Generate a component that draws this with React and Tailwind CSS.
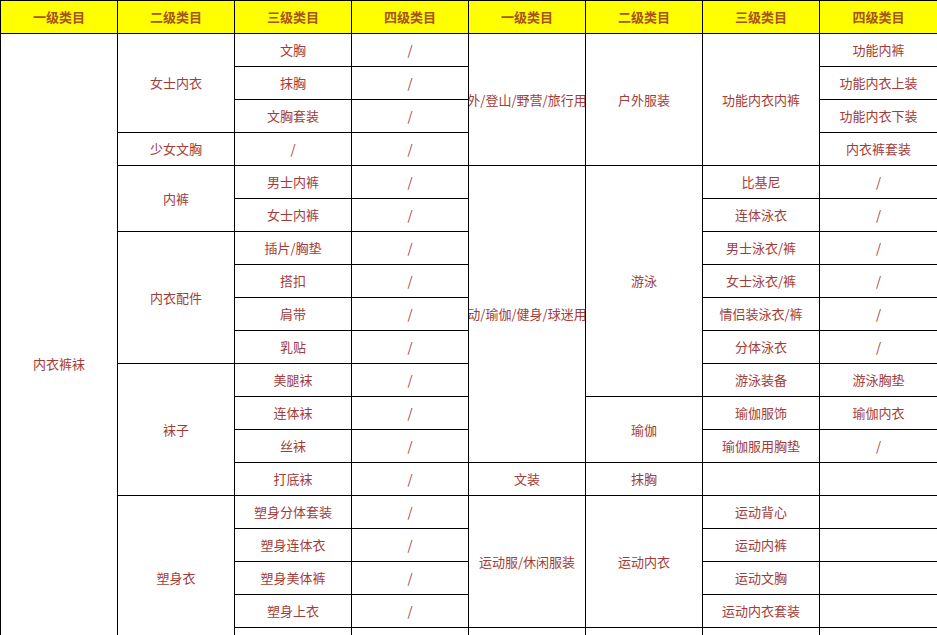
// App.jsx
import React from 'react';

const headers = ['一级类目', '二级类目', '三级类目', '四级类目', '一级类目', '二级类目', '三级类目', '四级类目'];

// cells listed row by row, [text, rowSpan]
const rows = [
  [['内衣裤袜', 20], ['女士内衣', 3], ['文胸'], ['/'], ['户外/登山/野营/旅行用品', 4], ['户外服装', 4], ['功能内衣内裤', 4], ['功能内裤']],
  [['抹胸'], ['/'], ['功能内衣上装']],
  [['文胸套装'], ['/'], ['功能内衣下装']],
  [['少女文胸'], ['/'], ['/'], ['内衣裤套装']],
  [['内裤', 2], ['男士内裤'], ['/'], ['运动/瑜伽/健身/球迷用品', 9], ['游泳', 7], ['比基尼'], ['/']],
  [['女士内裤'], ['/'], ['连体泳衣'], ['/']],
  [['内衣配件', 4], ['插片/胸垫'], ['/'], ['男士泳衣/裤'], ['/']],
  [['搭扣'], ['/'], ['女士泳衣/裤'], ['/']],
  [['肩带'], ['/'], ['情侣装泳衣/裤'], ['/']],
  [['乳贴'], ['/'], ['分体泳衣'], ['/']],
  [['袜子', 4], ['美腿袜'], ['/'], ['游泳装备'], ['游泳胸垫']],
  [['连体袜'], ['/'], ['瑜伽', 2], ['瑜伽服饰'], ['瑜伽内衣']],
  [['丝袜'], ['/'], ['瑜伽服用胸垫'], ['/']],
  [['打底袜'], ['/'], ['文装'], ['抹胸'], [''], ['']],
  [['塑身衣', 5], ['塑身分体套装'], ['/'], ['运动服/休闲服装', 4], ['运动内衣', 4], ['运动背心'], ['']],
  [['塑身连体衣'], ['/'], ['运动内裤'], ['']],
  [['塑身美体裤'], ['/'], ['运动文胸'], ['']],
  [['塑身上衣'], ['/'], ['运动内衣套装'], ['']],
  // rows below the fold
  [[''], [''], [''], [''], [''], ['']],
  [[''], [''], [''], [''], [''], [''], ['']],
];

const spanClass = {
  1: '',
  2: 'row-span-2',
  3: 'row-span-3',
  4: 'row-span-4',
  5: 'row-span-5',
  7: 'row-span-7',
  9: 'row-span-9',
  20: 'row-span-20',
};

export default function App() {
  return (
    <div
      className="w-[937px] h-[635px] overflow-hidden bg-white"
      style={{ fontFamily: '"Noto Sans CJK SC", "Liberation Sans", sans-serif' }}
    >
      <div className="grid grid-cols-[repeat(7,116px)_117px] auto-rows-[32px] gap-px bg-black border-l border-t border-black w-max">
        {/* header */}
        {headers.map((h, i) => (
          <div
            key={'h' + i}
            className="bg-[#ffff00] flex items-center justify-center text-[13px] font-bold text-[#a8521c]"
          >
            {h}
          </div>
        ))}

        {/* body */}
        {rows.map((row, r) =>
          row.map(([text, span = 1], c) => (
            <div
              key={r + '-' + c}
              className={
                'bg-white flex items-center justify-center overflow-hidden whitespace-nowrap text-[13px] text-[#a23c38] ' +
                spanClass[span]
              }
            >
              <span className="shrink-0">{text}</span>
            </div>
          ))
        )}
      </div>
    </div>
  );
}
